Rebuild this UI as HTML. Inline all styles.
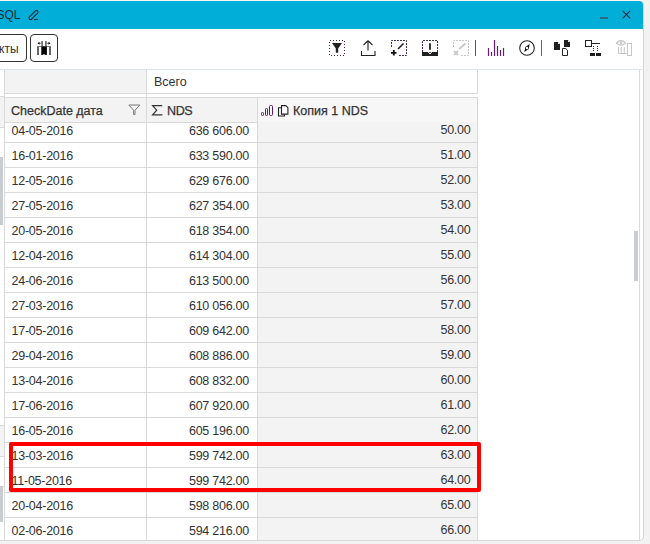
<!DOCTYPE html>
<html><head><meta charset="utf-8">
<style>
*{margin:0;padding:0;box-sizing:border-box}
html,body{width:650px;height:544px;overflow:hidden;background:#f2f2f2;font-family:"Liberation Sans",sans-serif;color:#333}
.a{position:absolute}
#win{position:absolute;left:-20px;top:0;width:664px;height:541px;background:#fff;border-right:1px solid #d4d4d4;border-bottom:1px solid #d9d9d9;border-radius:0 5px 5px 0}
#title{position:absolute;left:0;top:1px;width:643px;height:28px;background:#00aed8;border-radius:0 4px 0 0}
.hl{position:absolute;height:1px;background:#d9d9d9}
.vl{position:absolute;width:1px;background:#d9d9d9}
.t{position:absolute;font-size:12.5px;line-height:14px;white-space:nowrap;color:#333}
.r{text-align:right}
.h{-webkit-text-stroke:0.25px #333}
.d{letter-spacing:-0.25px}
svg{position:absolute;overflow:visible}
</style></head><body>
<div id="win"></div>
<div class="a" style="left:0;top:0;width:643px;height:1px;background:#fcf7f3"></div>
<div id="title"></div>
<!-- window borders -->
<div class="vl" style="left:639px;top:70px;height:471px;background:#dadada"></div>

<div class="a" style="left:634px;top:231px;width:4px;height:50px;background:#c9ccd1"></div>
<!-- title text -->
<div class="t" style="left:-3.5px;top:8px;font-size:12px;color:#1b2a33">SQL</div>
<svg style="left:28px;top:9px" width="12" height="12" viewBox="0 0 12 12"><path d="M1.5 10.5 L1 8.3 L7.6 1.7 Q8.4 1 9.2 1.7 L9.8 2.3 Q10.5 3.1 9.8 3.9 L3.2 10.5 Z" fill="none" stroke="#1b2a33" stroke-width="1.1"/><path d="M6 10.6 H10" stroke="#1b2a33" stroke-width="1"/></svg>
<div class="a" style="left:600px;top:17px;width:8px;height:2px;background:#2a6e86"></div>
<svg style="left:621.6px;top:10px" width="9" height="9" viewBox="0 0 9 9"><path d="M0.6 0.8 L8.2 8.4 M8.2 0.8 L0.6 8.4" stroke="#1b2a33" stroke-width="1.05"/></svg>

<!-- toolbar -->
<div class="a" style="left:-10px;top:34px;width:37px;height:28px;border:1px solid #333;border-radius:4px"></div>
<div class="t" style="left:-1px;top:42px;font-size:12px">кты</div>
<div class="a" style="left:30px;top:34px;width:28px;height:28px;border:1px solid #333;border-radius:4px"></div>
<svg style="left:36px;top:40px" width="16" height="16" viewBox="0 0 16 16">
<rect x="1" y="6" width="2" height="9" fill="#666"/>
<rect x="13" y="6" width="2" height="9" fill="#666"/>
<rect x="1" y="6" width="14" height="1" fill="#777"/>
<rect x="5.3" y="1" width="1.6" height="14" fill="#666"/>
<rect x="9.1" y="1" width="1.6" height="14" fill="#666"/>
<path d="M5.5 6.5 H10.8 V15 L8 14.3 L5.5 15 Z" fill="#000"/>
<path d="M3 3.3 H5.3 M10.7 3.3 H13" stroke="#777" stroke-width="1"/>
<path d="M1.5 3.3 L3.5 1.8 V4.8 Z M14.5 3.3 L12.5 1.8 V4.8 Z" fill="#000"/>
</svg>

<div class="hl" style="left:0;top:69px;width:644px;background:#dde3ea"></div>

<!-- right toolbar icons -->
<svg style="left:329px;top:40px" width="16" height="16" viewBox="0 0 16 16">
<g fill="#4a1a66"><rect x="1" y="0" width="1" height="1"/><rect x="15" y="1" width="1" height="1"/><rect x="4" y="0" width="1" height="1"/><rect x="15" y="4" width="1" height="1"/><rect x="7" y="0" width="1" height="1"/><rect x="15" y="7" width="1" height="1"/><rect x="10" y="0" width="1" height="1"/><rect x="15" y="10" width="1" height="1"/><rect x="13" y="0" width="1" height="1"/><rect x="15" y="13" width="1" height="1"/><rect x="2" y="15" width="1" height="1"/><rect x="0" y="2" width="1" height="1"/><rect x="5" y="15" width="1" height="1"/><rect x="0" y="5" width="1" height="1"/><rect x="8" y="15" width="1" height="1"/><rect x="0" y="8" width="1" height="1"/><rect x="11" y="15" width="1" height="1"/><rect x="0" y="11" width="1" height="1"/><rect x="14" y="15" width="1" height="1"/><rect x="0" y="14" width="1" height="1"/></g>
<path d="M3 3 H13 L9.2 8.5 V12.8 H6.8 V8.5 Z" fill="#222"/>
</svg>
<svg style="left:360px;top:40px" width="16" height="16" viewBox="0 0 16 16">
<path d="M8 1 V10.5 M3.5 5 L8 0.8 L12.5 5" stroke="#222" stroke-width="1.1" fill="none"/>
<path d="M1.5 11 V15.5 H15 V11" stroke="#222" stroke-width="1.1" fill="none"/>
</svg>
<svg style="left:391px;top:40px" width="16" height="16" viewBox="0 0 16 16">
<path d="M0.5 7 V0.5 H15.5 V15.5 H8" fill="none" stroke="#4a2a5a" stroke-width="1" stroke-dasharray="2 1"/>
<path d="M7 9 L12.5 3.5" stroke="#222" stroke-width="1.6"/>
<path d="M0 12.8 H5.5 M2.8 10 V15.5" stroke="#111" stroke-width="1.8"/>
</svg>
<svg style="left:422px;top:40px" width="16" height="16" viewBox="0 0 16 16">
<path d="M0.5 12 V0.5 H15.5 V12" fill="none" stroke="#4a2a5a" stroke-width="1" stroke-dasharray="2 1"/>
<rect x="0" y="12" width="16" height="4" fill="#1f1f1f"/>
<path d="M8 3.2 V9.8" stroke="#111" stroke-width="1.7"/>
<path d="M6.3 12 L8 14 L9.7 12" stroke="#fff" stroke-width="1" fill="none"/>
</svg>
<svg style="left:453px;top:40px" width="16" height="16" viewBox="0 0 16 16">
<path d="M0.5 7 V0.5 H15.5 V15.5 H8" fill="none" stroke="#c8c8c8" stroke-width="1" stroke-dasharray="2 1"/>
<path d="M6 9 L12.5 3.5" stroke="#cacaca" stroke-width="2"/>
<path d="M1 11 L5 15 M5 11 L1 15" stroke="#c8c8c8" stroke-width="1.8"/>
</svg>
<div class="a" style="left:475px;top:40px;width:1px;height:16px;background:#555"></div>
<svg style="left:487px;top:40px" width="18" height="16" viewBox="0 0 18 16">
<path d="M1.5 8 V16 M4.5 12 V16 M7.5 0 V16 M10.5 6 V16 M13.5 10 V16 M16.5 8 V16" stroke="#6b1a7b" stroke-width="1.2"/>
</svg>
<svg style="left:519px;top:40px" width="16" height="16" viewBox="0 0 16 16">
<circle cx="8" cy="8" r="7.3" fill="none" stroke="#222" stroke-width="1.05"/>
<path d="M5.4 12.1 L6.3 6.9 L10.6 3.9 L9.7 9.1 Z" fill="#111"/>
<circle cx="8" cy="8" r="1.2" fill="#fff"/>
</svg>
<div class="a" style="left:541px;top:40px;width:1px;height:16px;background:#666"></div>
<svg style="left:554px;top:40px" width="16" height="16" viewBox="0 0 16 16">
<path d="M0 2 H4 L6 4 V10 H0 Z" fill="#1f1f1f"/>
<path d="M4 2 V4 H6" fill="#fff"/>
<path d="M10 0 H14 L16 2 V7 H10 Z" fill="#1f1f1f"/>
<path d="M14 0 V2 H16" fill="#fff"/>
<path d="M8.5 8.5 H11.8 L13.5 10.2 V15.5 H8.5 Z" fill="#fff" stroke="#222" stroke-width="1"/>
</svg>
<svg style="left:585px;top:40px" width="17" height="16" viewBox="0 0 17 16">
<rect x="0.5" y="0.5" width="6" height="6" fill="none" stroke="#222" stroke-width="1"/>
<path d="M7 3.5 H15" stroke="#222" stroke-width="1"/>
<g fill="#4a1a66"><rect x="8" y="6" width="1" height="1"/><rect x="12" y="6" width="1" height="1"/><rect x="8" y="8" width="1" height="1"/><rect x="12" y="8" width="1" height="1"/><rect x="8" y="10" width="1" height="1"/><rect x="12" y="10" width="1" height="1"/></g>
<rect x="5" y="13" width="5" height="3" fill="#1f1f1f"/>
<rect x="11" y="13" width="5" height="3" fill="#1f1f1f"/>
</svg>
<svg style="left:616px;top:40px" width="17" height="16" viewBox="0 0 17 16">
<path d="M0.5 3 Q5 -1.5 9.5 3 Q5 7.5 0.5 3 Z" fill="none" stroke="#c8c8c8" stroke-width="1.3"/>
<circle cx="5" cy="3" r="1.2" fill="#c8c8c8"/>
<path d="M2.5 7 V13.5 H11 M5.3 7 V13.5 M8.3 7 V13.5" stroke="#c8c8c8" stroke-width="1" fill="none"/>
<rect x="11.5" y="3.5" width="4" height="12" fill="none" stroke="#c8c8c8" stroke-width="1"/>
</svg>

<!-- table backgrounds -->
<div class="a" style="left:5px;top:70px;width:141px;height:23px;background:#f3f3f3"></div>
<div class="a" style="left:5px;top:98px;width:472px;height:24px;background:#f3f3f3"></div>
<div class="a" style="left:258px;top:98px;width:219px;height:24px;background:#f7f7f7"></div>
<div class="a" style="left:258px;top:122px;width:219px;height:418px;background:#f3f3f3"></div>
<!-- gutter -->
<div class="hl" style="left:0;top:96px;width:4px"></div>
<div class="a" style="left:0;top:97px;width:4px;height:30px;background:#f3f3f3"></div>
<div class="hl" style="left:0;top:127px;width:4px"></div>
<div class="a" style="left:0;top:157px;width:3px;height:68px;background:#c9ccd1"></div>
<div class="hl" style="left:0;top:425px;width:4px"></div>
<div class="a" style="left:0;top:426px;width:4px;height:30px;background:#f3f3f3"></div>
<div class="hl" style="left:0;top:456px;width:4px"></div>
<div class="hl" style="left:0;top:486px;width:4px;background:#e4e4e4"></div>
<div class="a" style="left:0;top:486px;width:3px;height:36px;background:#c9ccd1"></div>
<!-- grid lines -->
<div class="vl" style="left:4px;top:70px;height:470px"></div>
<div class="vl" style="left:146px;top:70px;height:470px"></div>
<div class="vl" style="left:257px;top:97px;height:443px"></div>
<div class="vl" style="left:477px;top:70px;height:24px"></div>
<div class="vl" style="left:477px;top:97px;height:443px"></div>
<div class="hl" style="left:5px;top:93px;width:472px"></div>
<div class="hl" style="left:5px;top:97px;width:472px"></div>
<div class="hl" style="left:5px;top:122px;width:252px"></div>
<div id="rowlines">
<div class="hl" style="left:5px;top:142px;width:472px"></div>
<div class="hl" style="left:5px;top:167px;width:472px"></div>
<div class="hl" style="left:5px;top:192px;width:472px"></div>
<div class="hl" style="left:5px;top:217px;width:472px"></div>
<div class="hl" style="left:5px;top:242px;width:472px"></div>
<div class="hl" style="left:5px;top:267px;width:472px"></div>
<div class="hl" style="left:5px;top:292px;width:472px"></div>
<div class="hl" style="left:5px;top:317px;width:472px"></div>
<div class="hl" style="left:5px;top:342px;width:472px"></div>
<div class="hl" style="left:5px;top:367px;width:472px"></div>
<div class="hl" style="left:5px;top:392px;width:472px"></div>
<div class="hl" style="left:5px;top:417px;width:472px"></div>
<div class="hl" style="left:5px;top:442px;width:472px"></div>
<div class="hl" style="left:5px;top:467px;width:472px"></div>
<div class="hl" style="left:5px;top:492px;width:472px"></div>
<div class="hl" style="left:5px;top:517px;width:472px"></div>
</div>

<!-- header texts -->
<div class="t" style="left:154px;top:75px">Всего</div>
<div class="t h" style="left:11px;top:104px">CheckDate дата</div>
<svg style="left:128px;top:104px" width="13" height="11" viewBox="0 0 13 11"><path d="M0.8 1 H11.8 L7 6.2 V10.5 H5.6 V6.2 Z" fill="none" stroke="#7a7a7a" stroke-width="1"/></svg>
<svg style="left:151px;top:104px" width="12" height="12" viewBox="0 0 12 12"><path d="M10.6 2.2 V1.6 H1.6 L5.7 6.2 L1.6 10.8 H10.8 V10.2" fill="none" stroke="#333" stroke-width="1.2" stroke-linejoin="miter"/></svg>
<div class="t h" style="left:167px;top:104px;letter-spacing:-0.4px">NDS</div>
<svg style="left:261px;top:105px" width="13" height="12" viewBox="0 0 13 12">
<g fill="none" stroke="#5a1a6e" stroke-width="1">
<rect x="0.5" y="7.5" width="2" height="3" rx="0.8"/>
<rect x="4.5" y="3.5" width="2" height="7" rx="0.8"/>
<rect x="8.5" y="0.5" width="3" height="10" rx="1"/>
</g></svg>
<svg style="left:277px;top:105px" width="12" height="12" viewBox="0 0 12 12">
<path d="M4 2.8 H1.5 V11 H7.5 V9.6" fill="none" stroke="#222" stroke-width="1.1"/>
<path d="M4.5 0.6 H8.8 L10.9 2.7 V9.1 H4.5 Z" fill="#fff" stroke="#222" stroke-width="1.1"/>
</svg>
<div class="t h" style="left:293px;top:104px">Копия 1 NDS</div>

<div id="rows">
<div class="t d" style="left:11.5px;top:124px">04-05-2016</div>
<div class="t d r" style="left:149.0px;width:100px;top:124px">636 606.00</div>
<div class="t d r" style="left:370.5px;width:100px;top:123px">50.00</div>
<div class="t d" style="left:11.5px;top:149px">16-01-2016</div>
<div class="t d r" style="left:149.0px;width:100px;top:149px">633 590.00</div>
<div class="t d r" style="left:370.5px;width:100px;top:148px">51.00</div>
<div class="t d" style="left:11.5px;top:174px">12-05-2016</div>
<div class="t d r" style="left:149.0px;width:100px;top:174px">629 676.00</div>
<div class="t d r" style="left:370.5px;width:100px;top:173px">52.00</div>
<div class="t d" style="left:11.5px;top:199px">27-05-2016</div>
<div class="t d r" style="left:149.0px;width:100px;top:199px">627 354.00</div>
<div class="t d r" style="left:370.5px;width:100px;top:198px">53.00</div>
<div class="t d" style="left:11.5px;top:224px">20-05-2016</div>
<div class="t d r" style="left:149.0px;width:100px;top:224px">618 354.00</div>
<div class="t d r" style="left:370.5px;width:100px;top:223px">54.00</div>
<div class="t d" style="left:11.5px;top:249px">12-04-2016</div>
<div class="t d r" style="left:149.0px;width:100px;top:249px">614 304.00</div>
<div class="t d r" style="left:370.5px;width:100px;top:248px">55.00</div>
<div class="t d" style="left:11.5px;top:274px">24-06-2016</div>
<div class="t d r" style="left:149.0px;width:100px;top:274px">613 500.00</div>
<div class="t d r" style="left:370.5px;width:100px;top:273px">56.00</div>
<div class="t d" style="left:11.5px;top:299px">27-03-2016</div>
<div class="t d r" style="left:149.0px;width:100px;top:299px">610 056.00</div>
<div class="t d r" style="left:370.5px;width:100px;top:298px">57.00</div>
<div class="t d" style="left:11.5px;top:324px">17-05-2016</div>
<div class="t d r" style="left:149.0px;width:100px;top:324px">609 642.00</div>
<div class="t d r" style="left:370.5px;width:100px;top:323px">58.00</div>
<div class="t d" style="left:11.5px;top:349px">29-04-2016</div>
<div class="t d r" style="left:149.0px;width:100px;top:349px">608 886.00</div>
<div class="t d r" style="left:370.5px;width:100px;top:348px">59.00</div>
<div class="t d" style="left:11.5px;top:374px">13-04-2016</div>
<div class="t d r" style="left:149.0px;width:100px;top:374px">608 832.00</div>
<div class="t d r" style="left:370.5px;width:100px;top:373px">60.00</div>
<div class="t d" style="left:11.5px;top:399px">17-06-2016</div>
<div class="t d r" style="left:149.0px;width:100px;top:399px">607 920.00</div>
<div class="t d r" style="left:370.5px;width:100px;top:398px">61.00</div>
<div class="t d" style="left:11.5px;top:424px">16-05-2016</div>
<div class="t d r" style="left:149.0px;width:100px;top:424px">605 196.00</div>
<div class="t d r" style="left:370.5px;width:100px;top:423px">62.00</div>
<div class="t d" style="left:11.5px;top:449px">13-03-2016</div>
<div class="t d r" style="left:149.0px;width:100px;top:449px">599 742.00</div>
<div class="t d r" style="left:370.5px;width:100px;top:448px">63.00</div>
<div class="t d" style="left:11.5px;top:474px">11-05-2016</div>
<div class="t d r" style="left:149.0px;width:100px;top:474px">599 742.00</div>
<div class="t d r" style="left:370.5px;width:100px;top:473px">64.00</div>
<div class="t d" style="left:11.5px;top:499px">20-04-2016</div>
<div class="t d r" style="left:149.0px;width:100px;top:499px">598 806.00</div>
<div class="t d r" style="left:370.5px;width:100px;top:498px">65.00</div>
<div class="t d" style="left:11.5px;top:524px">02-06-2016</div>
<div class="t d r" style="left:149.0px;width:100px;top:524px">594 216.00</div>
<div class="t d r" style="left:370.5px;width:100px;top:523px">66.00</div>
</div>

<!-- red box -->
<div class="a" style="left:9px;top:442px;width:472px;height:50px;border:4px solid #ff0000;border-radius:2px"></div>


</body></html>
